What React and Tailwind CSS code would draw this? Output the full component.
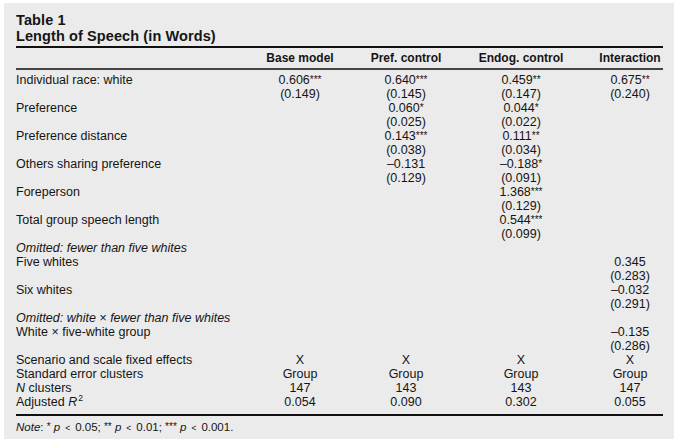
const FONT = { fontFamily: '"Liberation Sans", Arial, sans-serif' }

const GRID = 'grid grid-cols-[217px_134px_78px_152px_66px]'

const ROWS = [
  {
    label: 'Individual race: white',
    vals: [['0.606', '***'], ['0.640', '***'], ['0.459', '**'], ['0.675', '**']],
    ses: ['(0.149)', '(0.145)', '(0.147)', '(0.240)'],
  },
  {
    label: 'Preference',
    vals: [null, ['0.060', '*'], ['0.044', '*'], null],
    ses: [null, '(0.025)', '(0.022)', null],
  },
  {
    label: 'Preference distance',
    vals: [null, ['0.143', '***'], ['0.111', '**'], null],
    ses: [null, '(0.038)', '(0.034)', null],
  },
  {
    label: 'Others sharing preference',
    vals: [null, ['–0.131', ''], ['–0.188', '*'], null],
    ses: [null, '(0.129)', '(0.091)', null],
  },
  {
    label: 'Foreperson',
    vals: [null, null, ['1.368', '***'], null],
    ses: [null, null, '(0.129)', null],
  },
  {
    label: 'Total group speech length',
    vals: [null, null, ['0.544', '***'], null],
    ses: [null, null, '(0.099)', null],
  },
  { omitted: 'Omitted: fewer than five whites' },
  {
    label: 'Five whites',
    vals: [null, null, null, ['0.345', '']],
    ses: [null, null, null, '(0.283)'],
  },
  {
    label: 'Six whites',
    vals: [null, null, null, ['–0.032', '']],
    ses: [null, null, null, '(0.291)'],
  },
  { omitted: 'Omitted: white × fewer than five whites' },
  {
    label: 'White × five-white group',
    vals: [null, null, null, ['–0.135', '']],
    ses: [null, null, null, '(0.286)'],
  },
]

const FOOT = [
  { label: 'Scenario and scale fixed effects', vals: ['X', 'X', 'X', 'X'] },
  { label: 'Standard error clusters', vals: ['Group', 'Group', 'Group', 'Group'] },
  {
    label: (
      <>
        <i>N</i> clusters
      </>
    ),
    vals: ['147', '143', '143', '147'],
  },
  {
    label: (
      <>
        Adjusted <i>R</i>
        <sup className="text-[8.5px] relative -top-[5px] ml-[1px]">2</sup>
      </>
    ),
    vals: ['0.054', '0.090', '0.302', '0.055'],
  },
]

function Stars({ s }) {
  if (!s) return null
  return <sup className="text-[10px] leading-none relative -top-[1px]">{s}</sup>
}

function Coef({ v }) {
  if (!v) return <span />
  return (
    <span className="text-center">
      {v[0]}
      <Stars s={v[1]} />
    </span>
  )
}

function Row({ row }) {
  if (row.omitted) {
    return (
      <div className={GRID}>
        <span className="italic whitespace-nowrap">{row.omitted}</span>
      </div>
    )
  }
  return (
    <div className={GRID}>
      <span className="whitespace-nowrap">{row.label}</span>
      {row.vals.map((v, i) => (
        <Coef key={i} v={v} />
      ))}
      <span />
      {row.ses.map((s, i) => (
        <span key={i} className="text-center">
          {s}
        </span>
      ))}
    </div>
  )
}

function Lt() {
  return <span className="text-[8.5px] mx-[5px]">&lt;</span>
}

export default function App() {
  return (
    <div className="w-[680px] h-[444px] bg-white pt-[3px] pl-[4px] overflow-hidden" style={FONT}>
      <div className="w-[670px] h-[436px] bg-[#ebebeb] pl-[12px] pr-[11px] pt-[9px] text-[#151515]">
        <div className="text-[14.5px] leading-[16px] font-bold tracking-[0.1px]">
          <div>Table 1</div>
          <div>Length of Speech (in Words)</div>
        </div>
        <div className="mt-[2px] h-[2px] bg-[#111]" />

        <div className={`${GRID} mt-[3px] text-[12px] leading-[14px] font-bold`}>
          <span />
          <span className="text-center">Base model</span>
          <span className="text-center">Pref. control</span>
          <span className="text-center">Endog. control</span>
          <span className="text-center">Interaction</span>
        </div>
        <div className="mt-[3px] h-[1.5px] bg-[#444]" />

        <div className="mt-[3.5px] text-[12.5px] leading-[14px]">
          {ROWS.map((r, i) => (
            <Row key={i} row={r} />
          ))}
          {FOOT.map((r, i) => (
            <div key={i} className={GRID}>
              <span className="whitespace-nowrap">{r.label}</span>
              {r.vals.map((v, j) => (
                <span key={j} className="text-center">
                  {v}
                </span>
              ))}
            </div>
          ))}
        </div>

        <div className="mt-[5px] h-[1.5px] bg-[#111]" />
        <div className="mt-[4px] text-[11.5px] leading-[14px] whitespace-nowrap">
          <i>Note</i>: <Stars s="*" /> <i>p</i>
          <Lt />
          0.05; <Stars s="**" /> <i>p</i>
          <Lt />
          0.01; <Stars s="***" /> <i>p</i>
          <Lt />
          0.001.
        </div>
      </div>
    </div>
  )
}
